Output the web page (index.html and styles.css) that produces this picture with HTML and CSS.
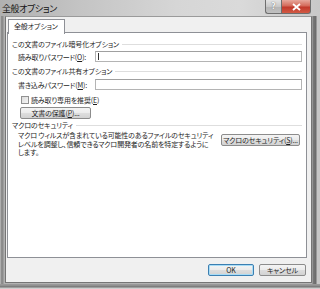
FILE: index.html
```html
<!DOCTYPE html>
<html lang="ja">
<head>
<meta charset="utf-8">
<title>全般オプション</title>
<link rel="stylesheet" href="styles.css">
</head>
<body>
<div class="window">
  <div class="titlebar">
    <span class="title">全般オプション</span>
    <div class="ctrls">
      <div class="help">?</div>
      <div class="close"><svg width="9" height="8" viewBox="0 0 9 8"><path d="M1 1 L8 7 M8 1 L1 7" stroke="#fff" stroke-width="1.8" fill="none"/></svg></div>
    </div>
  </div>
  <div class="frame">
    <div class="client">
      <div class="tabs"><div class="tab">全般オプション</div></div>
      <div class="panel">
        <div class="heading">この文書のファイル暗号化オプション</div>
        <div class="field field1">
          <span class="flabel">読み取りパスワード(<u>O</u>):</span>
          <div class="input"><span class="caret"></span></div>
        </div>
        <div class="heading heading2">この文書のファイル共有オプション</div>
        <div class="field field2">
          <span class="flabel">書き込みパスワード(<u>M</u>):</span>
          <div class="input"></div>
        </div>
        <div class="check">
          <span class="box"></span>
          <span class="clabel">読み取り専用を推奨(<u>E</u>)</span>
        </div>
        <div class="btn protect">文書の保護(<u>P</u>)...</div>
        <div class="heading heading3">マクロのセキュリティ</div>
        <div class="macro">
          <p class="desc">マクロ ウィルスが含まれている可能性のあるファイルのセキュリティ<br>レベルを調整し、信頼できるマクロ開発者の名前を特定するように<br>します。</p>
          <div class="btn macrobtn">マクロのセキュリティ(<u>S</u>)...</div>
        </div>
      </div>
      <div class="footer">
        <div class="btn ok">OK</div>
        <div class="btn cancel">キャンセル</div>
      </div>
    </div>
  </div>
</div>
</body>
</html>
```
FILE: styles.css
```css
html, body {
  margin: 0;
  padding: 0;
  width: 320px;
  height: 289px;
  overflow: hidden;
}
body {
  font-family: "Noto Sans CJK JP", "Noto Sans", sans-serif;
  font-feature-settings: "palt";
  font-size: 7px;
  letter-spacing: -0.15px;
  color: #1e1e1e;
  background: #c4c4c4;
}
u { text-decoration: underline; text-underline-offset: 1px; }

.window {
  width: 320px;
  height: 289px;
  display: flex;
  flex-direction: column;
  background:
    linear-gradient(to bottom, transparent 284px, #9c9c9c 284px, #8c8c8c 286px, #6e6e6e 287px, #cfcfcf 288px),
    linear-gradient(to right, #d0d0d0 0, #8e8e8e 1px, #8a8a8a 3px, #b2b2b2 4px, #b2b2b2 312px, #7a7a7a 313px, #6a6a6a 316px, #c6c6c6 317px);
}

.titlebar {
  height: 16px;
  flex: none;
  display: flex;
  align-items: flex-start;
  background: linear-gradient(to right, #b0b0b0 0, #c4c4c4 25%, #d6d6d6 55%, #dadada 75%, #c8c8c8 100%);
}
.title {
  font-size: 9px;
  letter-spacing: -0.4px;
  line-height: 16px;
  padding: 1px 0 0 2px;
  color: #111;
}
.ctrls {
  margin-left: auto;
  margin-right: 9px;
  display: flex;
}
.help, .close {
  height: 14px;
  box-sizing: border-box;
  border: 1px solid #6e6e6e;
  border-top: none;
  display: flex;
  align-items: center;
  justify-content: center;
}
.help {
  width: 16px;
  border-radius: 0 0 0 3px;
  border-right: none;
  background: linear-gradient(to bottom, #e2e2e2, #c8c8c8 50%, #b4b4b4 51%, #c0c0c0);
  color: #f4f4f4;
  font-family: "DejaVu Sans", sans-serif;
  font-weight: bold;
  font-size: 8px;
  letter-spacing: 0;
  text-shadow: 0 0 1px #555;
}
.close {
  width: 30px;
  border-radius: 0 0 3px 0;
  background: linear-gradient(to bottom, #e7a89c, #d46a5a 45%, #c2392b 55%, #d25a44);
}

.frame {
  flex: 1;
  display: flex;
  padding: 0 8px 6px 5px;
}
.client {
  flex: 1;
  display: flex;
  flex-direction: column;
  background: #f0f0f0;
  border: 1px solid #757575;
  border-top-color: #9a9a9a;
}

.tabs {
  display: flex;
  padding: 2px 0 0 2px;
  height: 15px;
  box-sizing: border-box;
}
.tab {
  height: 15px;
  box-sizing: border-box;
  border: 1px solid #8e9096;
  border-bottom: none;
  background: #fff;
  padding: 0 6px 0 5px;
  line-height: 13px;
  position: relative;
  z-index: 1;
}

.panel {
  height: 226px;
  box-sizing: border-box;
  margin: 0 4px 0 1px;
  border: 1px solid #8e9096;
  background: #fff;
  padding: 6px 4px 0 4px;
}

.heading {
  display: flex;
  align-items: center;
  gap: 3px;
  height: 10px;
  line-height: 10px;
  white-space: nowrap;
}
.heading::after {
  content: "";
  flex: 1;
  height: 1px;
  background: #dedede;
}
.heading2 { margin-top: 4px; }
.heading3 { margin-top: 1px; }

.field {
  display: flex;
  align-items: center;
  height: 11px;
  margin-left: 6px;
}
.field1 { margin-top: 2px; }
.field2 { margin-top: 3px; }
.flabel {
  width: 77px;
  flex: none;
  white-space: nowrap;
}
.input {
  flex: 1;
  height: 11px;
  box-sizing: border-box;
  border: 1px solid #b4b4b4;
  border-top-color: #a0a0a0;
  background: #fff;
  display: flex;
  align-items: center;
}
.caret {
  width: 1px;
  height: 7px;
  background: #333;
  margin-left: 2px;
}

.check {
  display: flex;
  align-items: center;
  height: 10px;
  margin-top: 5px;
  margin-left: 9px;
}
.box {
  width: 8px;
  height: 8px;
  box-sizing: border-box;
  border: 1px solid #929292;
  background: linear-gradient(135deg, #dcdcdc, #f6f6f6);
}
.clabel { margin-left: 2px; }

.btn {
  height: 12px;
  box-sizing: border-box;
  border: 1px solid #8c8c8c;
  border-radius: 2px;
  background: linear-gradient(to bottom, #f4f4f4, #ececec 45%, #dedede 50%, #d2d2d2);
  display: flex;
  align-items: center;
  justify-content: center;
  line-height: 10px;
  white-space: nowrap;
  flex: none;
}
.protect {
  width: 71px;
  margin: 2px 0 0 8px;
}

.macro {
  display: flex;
  align-items: flex-start;
  margin-top: 1px;
}
.desc {
  margin: 0 0 0 6px;
  width: 196px;
  line-height: 8.5px;
  white-space: nowrap;
}
.macrobtn {
  width: 79px;
  margin: 3px 0 0 7px;
}

.footer {
  flex: 1;
  display: flex;
  justify-content: flex-end;
  align-items: flex-start;
  gap: 5px;
  padding: 6px 5px 0 0;
}
.ok {
  width: 46px;
  border-color: #3c7fb1;
  box-shadow: inset 0 0 0 1px #a8dcf6;
}
.cancel {
  width: 47px;
}
```
